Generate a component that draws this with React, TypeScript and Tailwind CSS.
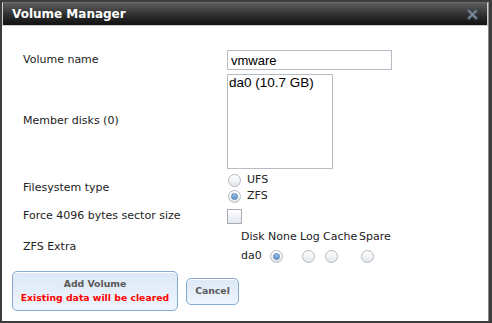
import React from 'react';

const Radio = ({ checked = false }: { checked?: boolean }) => (
  <span className="flex h-[13px] w-[13px] shrink-0 items-center justify-center rounded-full border border-[#b4b8bd] bg-gradient-to-b from-[#ffffff] to-[#e4e8ec]">
    {checked && (
      <span className="h-[7px] w-[7px] rounded-full border border-[#5a86b8] bg-gradient-to-b from-[#9cc0e6] to-[#5f92cc]" />
    )}
  </span>
);

const CloseIcon = () => (
  <svg width="11" height="11" viewBox="0 0 11 11">
    <path d="M2 2 L9 9 M9 2 L2 9" stroke="#4a5663" strokeWidth="3.2" strokeLinecap="square" />
    <path d="M2 2 L9 9 M9 2 L2 9" stroke="#7f8e9e" strokeWidth="1.5" strokeLinecap="square" />
  </svg>
);

export default function App() {
  const cols = [
    { name: 'None', w: 'w-[32px]', checked: true },
    { name: 'Log', w: 'w-[23px]', checked: false },
    { name: 'Cache', w: 'w-[36px]', checked: false },
    { name: 'Spare', w: 'w-[36px]', checked: false },
  ];

  return (
    <div className="h-[323px] w-[492px] bg-[#3d3d3d] p-[2px] pr-[3px] font-['DejaVu_Sans',sans-serif] text-[11px] text-[#222]">
      <div className="flex h-full flex-col border-r border-[#8a8a8a]">
        {/* Title bar */}
        <div className="flex h-[24px] items-center justify-between border border-[#cfcfcf] border-t-[#6a6a6a] bg-gradient-to-b from-[#5e5e5e] via-[#333] to-[#111] pl-[9px] pr-[9px]">
          <span className="text-[12px] font-bold text-white">Volume Manager</span>
          <CloseIcon />
        </div>

        {/* Body */}
        <div className="flex flex-1 flex-col bg-white pt-[24px]">
          <div className="flex h-[20px] items-center">
            <div className="w-[225px] pl-[21px]">Volume name</div>
            <input
              className="h-[20px] w-[165px] border border-[#b8bcc4] px-[3px] font-['Liberation_Sans',sans-serif] text-[13px] text-black outline-none"
              defaultValue="vmware"
            />
          </div>

          <div className="mt-[4px] flex h-[95px] items-center">
            <div className="w-[225px] pl-[21px]">Member disks (0)</div>
            <div className="h-[95px] w-[106px] border border-[#b8bcc4] px-[1px] font-['Liberation_Sans',sans-serif] text-[13.5px] leading-[16px] text-black">
              da0 (10.7 GB)
            </div>
          </div>

          <div className="mt-[3px] flex h-[32px] items-center">
            <div className="w-[225px] pl-[21px]">Filesystem type</div>
            <div className="flex flex-col pl-[1px]">
              <label className="flex h-[16px] items-center gap-[6px]">
                <Radio />
                <span>UFS</span>
              </label>
              <label className="flex h-[16px] items-center gap-[6px]">
                <Radio checked />
                <span>ZFS</span>
              </label>
            </div>
          </div>

          <div className="mt-[4px] flex h-[16px] items-center">
            <div className="w-[225px] pl-[21px]">Force 4096 bytes sector size</div>
            <span className="h-[15px] w-[15px] border border-[#a9adb3] bg-gradient-to-b from-[#ffffff] to-[#e2e8f0]" />
          </div>

          <div className="mt-[5px] flex h-[36px] items-center">
            <div className="w-[239px] pl-[21px]">ZFS Extra</div>
            <div className="flex flex-col gap-[3px]">
              <div className="flex h-[16px] items-center">
                <span className="w-[27px]">Disk</span>
                {cols.map((c) => (
                  <span key={c.name} className={c.w}>
                    {c.name}
                  </span>
                ))}
              </div>
              <div className="flex h-[16px] items-center">
                <span className="w-[27px]">da0</span>
                {cols.map((c) => (
                  <span key={c.name} className={`${c.w} flex pl-[2px]`}>
                    <Radio checked={c.checked} />
                  </span>
                ))}
              </div>
            </div>
          </div>

          {/* Buttons */}
          <div className="mt-[6px] flex items-center gap-[8px] pl-[10px]">
            <button className="flex h-[40px] w-[166px] flex-col items-center justify-center rounded-[5px] border border-[#86a9cf] bg-gradient-to-b from-[#dce8f6] to-[#eef5fd] text-[9.3px] font-bold leading-[14px] shadow-[inset_0_1px_0_#ffffff]">
              <span className="text-[#595959]">Add Volume</span>
              <span className="text-[#ff0000]">Existing data will be cleared</span>
            </button>
            <button className="h-[27px] w-[53px] rounded-[5px] border border-[#86a9cf] bg-gradient-to-b from-[#dce8f6] to-[#eef5fd] text-[9.3px] font-bold text-[#595959] shadow-[inset_0_1px_0_#ffffff]">
              Cancel
            </button>
          </div>
        </div>
      </div>
    </div>
  );
}
